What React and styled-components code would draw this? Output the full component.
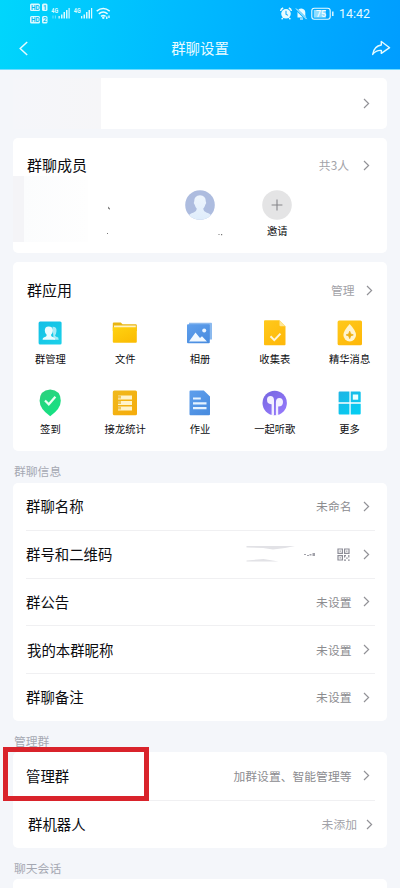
import React from "react";
import styled, { createGlobalStyle } from "styled-components";

const GlobalStyle = createGlobalStyle`
  * { box-sizing: border-box; }
  html, body { margin: 0; background: #f4f6fa; }
  body {
    font-family: "Noto Sans CJK SC", sans-serif;
    color: #0c0c10;
    overflow: hidden;
  }
  svg { display: block; flex: none; }
`;

const Screen = styled.div`
  width: 400px;
  height: 888px;
  overflow: hidden;
  background: #f4f6fa;
`;

const Header = styled.header`
  height: 70px;
  background: linear-gradient(100deg, #00d6fc 0%, #00bcff 42%, #009dff 100%);
  border-bottom: 1px solid #6fdcff;
  color: #e8fbff;
`;

const StatusBar = styled.div`
  height: 28px;
  padding: 0 29px;
  display: flex;
  align-items: center;
  justify-content: space-between;
`;

const StatusRight = styled.div`
  display: flex;
  align-items: center;
`;

const Time = styled.span`
  width: 32px;
  margin-left: 4px;
  font: 400 12.4px/28px Roboto, sans-serif;
  white-space: nowrap;
`;

const NavBar = styled.nav`
  height: 40px;
  padding: 0 9px 0 16px;
  display: grid;
  grid-template-columns: 60px 1fr 67px;
  align-items: center;
  & > :last-child { justify-self: end; }
`;

const NavTitle = styled.h1`
  margin: 0;
  text-align: center;
  font-size: 14.4px;
  font-weight: 400;
  line-height: 22px;
`;

const Card = styled.section`
  position: relative;
  height: ${(p) => p.$height}px;
  margin: ${(p) => p.$top || 0}px 13px 0;
  background: #fff;
  border-radius: 5px;
`;

const ProfileRow = styled.div`
  height: 100%;
  display: flex;
  align-items: center;
  justify-content: space-between;
  padding-right: 17px;
`;

const Redacted = styled.div`
  width: ${(p) => p.$w}px;
  height: ${(p) => p.$h}px;
  background: linear-gradient(90deg, ${(p) => p.$from}, ${(p) => p.$to});
`;

const CardHead = styled.div`
  height: ${(p) => p.$height}px;
  padding: ${(p) => p.$shift || 0}px ${(p) => p.$right}px 0 14px;
  display: flex;
  align-items: center;
  justify-content: space-between;
`;

const CardTitle = styled.h2`
  margin: 0;
  font-size: 15px;
  font-weight: 400;
  line-height: 22px;
`;

const Value = styled.span`
  display: flex;
  align-items: center;
  gap: ${(p) => p.$gap || 11.5}px;
  color: ${(p) => (p.$light ? "#a2a2a8" : "#8c8c90")};
  font-size: 11.8px;
  line-height: 18px;
`;

const Members = styled.div`
  display: flex;
`;

const HiddenMembers = styled.div`
  width: 148px;
  height: 66px;
  margin-top: -14px;
  display: flex;
`;

const Member = styled.div`
  width: 77.5px;
  display: flex;
  flex-direction: column;
  align-items: center;
  gap: 3px;
`;

const SmallLabel = styled.span`
  min-height: 16px;
  font-size: 10.3px;
  line-height: 16px;
  white-space: nowrap;
`;

const AppGrid = styled.div`
  display: grid;
  grid-template-columns: repeat(5, 1fr);
  row-gap: 22px;
`;

const AppItem = styled.div`
  display: flex;
  flex-direction: column;
  align-items: center;
  gap: 4px;
`;

const GroupLabel = styled.div`
  height: ${(p) => p.$height}px;
  padding: ${(p) => p.$pad}px 14px 0;
  color: #a5a8b2;
  font-size: 11.8px;
  line-height: 18px;
`;

const Row = styled.div`
  height: ${(p) => p.$height}px;
  margin: 0 12px 0 13px;
  padding: ${(p) => p.$shift || 0}px ${(p) => (p.$wide ? 2 : 5)}px 0 ${(p) => p.$indent || 0}px;
  display: flex;
  align-items: center;
  justify-content: space-between;
  border-bottom: ${(p) => (p.$last ? "0" : "1px solid #f0f0f2")};
`;

const RowLabel = styled.span`
  font-size: 14.4px;
  line-height: 22px;
`;

const Highlight = styled.div`
  position: absolute;
  left: -10px;
  top: -5px;
  width: 146px;
  height: 54px;
  border: 5px solid #d9232b;
  pointer-events: none;
`;

const Chevron = () => (
  <svg width="7" height="11" viewBox="0 0 7 11" fill="none" stroke="#929297" strokeWidth="1.2">
    <path d="M1 1 5.6 5.5 1 10" />
  </svg>
);

const SignalIcons = () => (
  <svg width="84" height="24" viewBox="29 2 84 24" fill="#d8faff">
    {[3.5, 16].map((y, i) => (
      <g key={y}>
        <rect x="30" y={y} width="10" height="7.5" rx="1.5" />
        <rect x="42" y={y} width="5.5" height="7.5" rx="1.5" />
        <text x="31" y={y + 6.2} fontSize="6.4" fontWeight="700" fontFamily="Roboto" fill="#00bdf3">HD</text>
        <text x="43" y={y + 6.2} fontSize="6.4" fontWeight="700" fontFamily="Roboto" fill="#00bdf3">{i + 1}</text>
      </g>
    ))}
    {[0, 22.5].map((x) => (
      <g key={x} transform={`translate(${x} 0)`}>
        <text x="51.3" y="12.8" fontSize="6.8" textLength="6.8" lengthAdjust="spacingAndGlyphs" fontWeight="700" fontFamily="Roboto">4G</text>
        <path d="M58.5 16h1.3v2.500h-1.3zM61 14.500h1.500v4H61zM63.500 12h1.500v6.500h-1.500zM66 10h1.500v8.500H66zM68.500 8h1.200v10.500h-1.200z" />
      </g>
    ))}
    <path d="M53 15.500v3M55.400 15.500v3" stroke="#7be5ff" strokeWidth=".9" />
    <g fill="none" stroke="#e8fcff" strokeWidth="1.5">
      <path d="M96.700 11.200q6.500-5.200 13 0M98.800 13.800q4.400-3.400 8.800 0M101 16.300q2.300-1.700 4.600 0" />
    </g>
    <circle cx="103.300" cy="17.800" r="1.200" />
    <path d="M106 16.500h1.500V19H106zM108.300 15.500h1.400V18h-1.400z" />
  </svg>
);

const StatusGlyphs = () => (
  <svg width="56" height="16" viewBox="280 6 56 16" fill="none" stroke="#e9fbff">
    <circle cx="287" cy="13.8" r="4.8" fill="#e9fbff" stroke="none" />
    <path d="M281.6 11q.3-2.2 2.6-3M292.4 11q-.3-2.2-2.6-3M283.8 18l-1.2 1.3M290.2 18l1.2 1.3" strokeWidth="1.4" />
    <path d="M287 10.8v3.4l2 1.2" stroke="#10acff" strokeWidth="1.1" />
    <path d="M298.5 16.8v-5q0-3 4-3.4 3.6.4 3.8 3.8v3.2l1.2 2h-9z" fill="#e9fbff" stroke="none" />
    <path d="M301 19h3" strokeWidth="1.2" />
    <path d="M297.2 9.2l10.4 10.2" stroke="#08afff" strokeWidth="2.4" />
    <path d="M297 8.5l10.6 10.6" strokeWidth="1" />
    <rect x="312.8" y="8.3" width="18.4" height="11" rx="2.5" strokeWidth="1.1" />
    <rect x="314.8" y="10" width="12" height="7.6" fill="#8fdcff" stroke="none" />
    <text x="322" y="17.3" textAnchor="middle" fontSize="9" fontFamily="Roboto" fontWeight="500" fill="#f4fdff" stroke="none">75</text>
    <path d="M333.8 11.5v4.6" strokeWidth="1.4" />
  </svg>
);

const BackIcon = () => (
  <svg width="14" height="18" viewBox="16 39 14 18" fill="none" stroke="#e4fbff" strokeWidth="1.5">
    <path d="M27.2 42 20.2 48.5 27.2 55" />
  </svg>
);

const ShareIcon = () => (
  <svg width="20" height="17" viewBox="372 40 20 17" fill="none" stroke="#e4fbff" strokeWidth="1.4" strokeLinejoin="round">
    <path d="M382.3 41.5 390.6 47.7 382.3 53.3V50.4Q377 50 373.7 54.4 375 46 382.3 45Z" />
  </svg>
);

const AvatarIcon = () => (
  <svg width="30" height="30" viewBox="0 0 30 30">
    <defs>
      <clipPath id="avatar-clip"><circle cx="15" cy="15" r="14.8" /></clipPath>
      <linearGradient id="avatar-body" x2="0" y2="1">
        <stop stopColor="#eef5fd" /><stop offset="1" stopColor="#dfedfb" />
      </linearGradient>
    </defs>
    <g clipPath="url(#avatar-clip)">
      <rect width="30" height="30" fill="#adbcdf" />
      <path d="M15 5.2q5.8.2 5.8 6.3 1.2 1.2-.6 3.5-.7 2.7-2 3.7.2 2.8 3.1 3.8 6 1.3 6.7 7.5H2q.7-6.2 6.7-7.5 2.9-1 3.1-3.8-1.3-1-2-3.7-1.8-2.3-.6-3.5 0-6.1 5.8-6.3z" fill="url(#avatar-body)" />
    </g>
  </svg>
);

const PlusIcon = () => (
  <svg width="30" height="30" viewBox="0 0 30 30">
    <circle cx="15" cy="15" r="14.8" fill="#e4e4e5" />
    <path d="M15 9.6v10.800M9.6 15h10.800" stroke="#85858a" strokeWidth="1.1" />
  </svg>
);

const Specks = styled.svg`
  position: absolute;
  left: 0;
  top: 64px;
`;

const NumberSmudge = () => (
  <svg width="86" height="20" viewBox="238 544 86 20">
    <path d="M246.5 546h48.5l-10 2-12 1.5-10-1.5-16.5-.5zM246.5 560.5l17-1.5 15 2.5h-32z" fill="#e2e2e6" />
    <path d="M304 554h2v1h-2zM307 555h2v1h-2zM309.5 554h2v1.5h-2zM312.5 553h2.5v3h-2.5z" fill="#a2a2aa" />
    <path d="M324 561.500l4-3v2l-2.500 1z" fill="#dedee3" />
  </svg>
);

const QrIcon = () => (
  <svg width="13" height="13" viewBox="0 0 13 13" fill="none" stroke="#8e8e98" strokeWidth="1.2">
    <path d="M1 1h4.4v4.4H1zM7.6 1H12v4.4H7.6zM1 7.6h4.4V12H1z" />
    <path d="M2.6 3.2h1.2M9.2 3.2h1.2M2.6 9.8h1.2M7 7.7h2M7.6 8v1.5M11.8 7v2.6M9.2 10.2h1.5M7 12.2h2M11 12.2h1.7" />
  </svg>
);

const Gradients = () => (
  <svg width="0" height="0">
    <defs>
      {[
        ["cyan", "#12bfe6", "#1bcfe9"],
        ["yellow", "#ffc91c", "#ffb90a"],
        ["folder", "#ffd210", "#fbbd04"],
        ["amber", "#f0b91c", "#f5ad0c"],
        ["blue", "#5f9fec", "#4a8de0"],
        ["green", "#2fcf7c", "#13e283"],
        ["purple", "#7566e0", "#9478fa"],
        ["tile", "#20b4e4", "#04cdf2"],
      ].map(([id, a, b]) => (
        <linearGradient key={id} id={id} x2=".7" y2="1">
          <stop stopColor={a} /><stop offset="1" stopColor={b} />
        </linearGradient>
      ))}
    </defs>
  </svg>
);

const icons = {
  manage: (
    <>
      <rect x="2.6" y="2.6" width="23" height="23" rx="1.5" fill="url(#cyan)" />
      <path d="M16.5 7.8q4.3-.2 4 4.2-.2 3-1.5 4.2 0 1.5 3.2 2.4l.5 2.1h-5z" fill="#a8eaf6" />
      <path d="M12.6 7.5q4.4 0 4.3 4.3-.1 2.8-2 4.3 0 1.6 3 2.5 1.2.4 1.2 2.2H6.6q0-1.8 1.2-2.2 3-.9 3-2.5-1.9-1.5-2-4.3-.1-4.3 3.8-4.3z" fill="#ebfcff" />
    </>
  ),
  files: (
    <>
      <path d="M1.8 4.5q0-1 1-1h7l1.7 1.8h13.3q1 0 1 1V12h-24z" fill="#e9b512" />
      <path d="M3 6.5h21.8V9H3z" fill="#fff3c5" />
      <path d="M1.8 8.3h24v14.4q0 1-1 1h-22q-1 0-1-1z" fill="url(#folder)" />
    </>
  ),
  album: (
    <>
      <path d="M3 3.8h22.3q.7 0 .7.7v16H4z" fill="#8bb9ee" />
      <rect x="1" y="5.2" width="22.8" height="19" rx="1" fill="url(#blue)" />
      <path d="M3 22.5 9.5 13.5 14 19l2-1.8 5 5.3z" fill="#f0f8ff" />
      <circle cx="18.2" cy="11.5" r="2" fill="#eaf5ff" />
    </>
  ),
  form: (
    <>
      <path d="M4 1.3h14.5l6 6v18q0 .9-.9.9H4q-1 0-1-.9v-23q0-1 1-1z" fill="url(#yellow)" />
      <path d="M18.5 1.3v4.9q0 1 1 1h5z" fill="#ffe695" />
      <path d="m9.5 17.3 3.8 3.8 6.2-6.5" fill="none" stroke="#fff5d9" strokeWidth="2" />
    </>
  ),
  essence: (
    <>
      <rect x="1.6" y="1.6" width="24.4" height="24.6" rx="1.5" fill="url(#yellow)" />
      <path d="M13.7 5q6.3 6.7 6.3 11.1a6.3 6.3 0 0 1-12.6 0Q7.4 11.7 13.7 5z" fill="#fff4cf" />
      <path d="m13.7 12.2 1 2.7 2.6 1-2.6 1-1 2.7-1-2.7-2.6-1 2.6-1z" fill="#eeae12" stroke="#eeae12" strokeWidth=".8" />
    </>
  ),
  checkin: (
    <>
      <path d="M14.2.6q10.6.8 10.6 11.2 0 8-10.6 15.500Q3.600 19.800 3.600 11.800 3.600 1.400 14.200.6z" fill="url(#green)" />
      <path d="m9 11.5 3.8 3.8 6.6-7.5" fill="none" stroke="#e9fff2" strokeWidth="2.2" />
    </>
  ),
  relay: (
    <>
      <rect x="1.8" y="1.6" width="24.2" height="24.6" rx="1.5" fill="url(#amber)" />
      <path d="M7 6.5h14v4H7zM7 12h14v4H7zM7 17.5h14v4H7z" fill="#fff3ca" />
      <path d="M7 6.5h3v3H7zM7 12h3v3H7zM7 17.5h3v3H7z" fill="#eec75a" />
    </>
  ),
  homework: (
    <>
      <path d="M4.5 1.6h13.3l6.2 6v17.6q0 1-1 1H4.5q-1 0-1-1V2.6q0-1 1-1z" fill="url(#blue)" />
      <path d="M7 9.5h7.8M7 14.3h13.5M7 19.2h13.5" stroke="#e6f3ff" strokeWidth="2.2" />
    </>
  ),
  music: (
    <>
      <circle cx="13.7" cy="14" r="12.2" fill="url(#purple)" />
      <path d="M6 10.6q.1-3.7 3.4-3.7 3.5.2 3.6 4V26h-2.4V15.2Q6 15.5 6 10.6zM14.9 13q.2-3.7 3.4-3.9 3.6.1 3.7 3.8 0 4.6-4.8 4.5V26h-2.3z" fill="#f3f0ff" />
    </>
  ),
  more: (
    <>
      <path d="M3.6 2.6h9.8v10.6H2.6V3.6q0-1 1-1zM14.7 2.6h9q1 0 1 1v9.6h-10zM2.6 14.7h10.8v10.8H3.6q-1 0-1-1zM14.7 14.7h10v9.8q0 1-1 1h-9z" fill="url(#tile)" />
      <rect x="16.8" y="5.5" width="5.4" height="5.2" fill="#eaffff" />
    </>
  ),
};

const apps = [
  ["manage", "群管理"],
  ["files", "文件"],
  ["album", "相册"],
  ["form", "收集表"],
  ["essence", "精华消息"],
  ["checkin", "签到"],
  ["relay", "接龙统计"],
  ["homework", "作业"],
  ["music", "一起听歌"],
  ["more", "更多"],
];

const infoRows = [
  { label: "群聊名称", value: "未命名", height: 48 },
  { label: "群号和二维码", qr: true, height: 48 },
  { label: "群公告", value: "未设置", height: 47 },
  { label: "我的本群昵称", value: "未设置", height: 48, indent: 1, shift: 1.5 },
  { label: "群聊备注", value: "未设置", height: 47, last: true },
];

export default function App() {
  return (
    <Screen>
      <GlobalStyle />
      <Header>
        <StatusBar>
          <SignalIcons />
          <StatusRight>
            <StatusGlyphs />
            <Time>14:42</Time>
          </StatusRight>
        </StatusBar>
        <NavBar>
          <BackIcon />
          <NavTitle>群聊设置</NavTitle>
          <ShareIcon />
        </NavBar>
      </Header>

      <Card $top={8} $height={51}>
        <ProfileRow>
          <Redacted $w={88} $h={51} $from="#f5f6fa" $to="#f6f6f8" />
          <Chevron />
        </ProfileRow>
      </Card>

      <Card $top={9} $height={114.5}>
        <CardHead $height={52} $right={17} $shift={2}>
          <CardTitle>群聊成员</CardTitle>
          <Value $light $gap={14}>共3人<Chevron /></Value>
        </CardHead>
        <Members>
          <HiddenMembers>
            <Redacted $w={11} $h={66} $from="#f4f4f7" $to="#f4f4f7" />
            <Redacted $w={64} $h={66} $from="#fbfcfd" $to="#fefefe" />
          </HiddenMembers>
          <Member><AvatarIcon /></Member>
          <Member><PlusIcon /><SmallLabel>邀请</SmallLabel></Member>
        </Members>
        <Specks width="220" height="40" viewBox="13 202 220 40" fill="#777">
          <path d="M108 206.5l2 2v1.2l-2-1.2zM107 233h1v1h-1zM218.5 234h1v1h-1zM221 234h1.2v1.2H221z" />
        </Specks>
      </Card>

      <Card $top={9} $height={189.5}>
        <Gradients />
        <CardHead $height={57.5} $right={14}>
          <CardTitle>群应用</CardTitle>
          <Value $light>管理<Chevron /></Value>
        </CardHead>
        <AppGrid>
          {apps.map(([id, label]) => (
            <AppItem key={id}>
              <svg width="28" height="28" viewBox="0 0 28 28">{icons[id]}</svg>
              <SmallLabel>{label}</SmallLabel>
            </AppItem>
          ))}
        </AppGrid>
      </Card>

      <GroupLabel $height={31.5} $pad={11}>群聊信息</GroupLabel>
      <Card $height={238}>
        {infoRows.map((row) => (
          <Row key={row.label} $height={row.height} $indent={row.indent} $shift={row.shift} $last={row.last}>
            <RowLabel>{row.label}</RowLabel>
            <Value $gap={row.qr ? 13 : 11.5}>
              {row.qr ? <><NumberSmudge /><QrIcon /></> : row.value}
              <Chevron />
            </Value>
          </Row>
        ))}
      </Card>

      <GroupLabel $height={31.5} $pad={11.5}>管理群</GroupLabel>
      <Card $height={95.5}>
        <Row $height={48.5}>
          <RowLabel>管理群</RowLabel>
          <Value $gap={11.5}>加群设置、智能管理等<Chevron /></Value>
        </Row>
        <Row $height={47} $indent={2} $wide $last>
          <RowLabel>群机器人</RowLabel>
          <Value $light $gap={9}>未添加<Chevron /></Value>
        </Row>
        <Highlight />
      </Card>

      <GroupLabel $height={31.5} $pad={11}>聊天会话</GroupLabel>
      <Card $height={20} />
    </Screen>
  );
}
